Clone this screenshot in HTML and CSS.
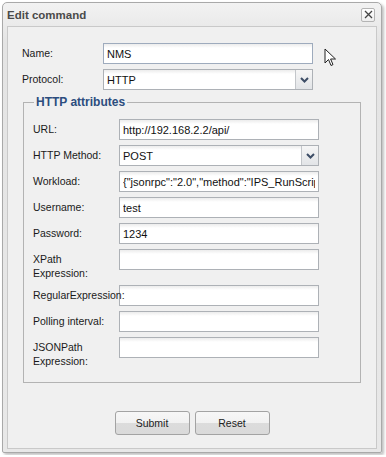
FILE: index.html
```html
<!DOCTYPE html>
<html lang="en">
<head>
  <meta charset="UTF-8">
  <title>Edit command</title>
  <link rel="stylesheet" href="styles.css">
</head>
<body>

  <div class="window">
    <div class="titlebar">
      <span class="title">Edit command</span>
      <button type="button" class="close" title="Close">
        <svg width="9" height="9" viewBox="0 0 9 9"><path d="M1 1 L8 8 M8 1 L1 8" stroke="#444" stroke-width="1.3" fill="none"/></svg>
      </button>
    </div>

    <form class="content">
      <div class="grid main-grid">
        <label for="cmdName">Name:</label>
        <input type="text" id="cmdName" class="field focused" value="NMS">

        <label for="protocol">Protocol:</label>
        <div class="combo">
          <select id="protocol"><option>HTTP</option></select>
          <span class="arrow"><svg width="9" height="6" viewBox="0 0 9 6"><path d="M1 1 L4.5 4.5 L8 1" stroke="#3d4d66" stroke-width="2" fill="none"/></svg></span>
        </div>
      </div>

      <fieldset class="attrs">
        <legend>HTTP attributes</legend>
        <div class="grid attr-grid">
          <label for="url">URL:</label>
          <input type="text" id="url" class="field" value="http://192.168.2.2/api/">

          <label for="method">HTTP Method:</label>
          <div class="combo">
            <select id="method"><option>POST</option></select>
            <span class="arrow"><svg width="9" height="6" viewBox="0 0 9 6"><path d="M1 1 L4.5 4.5 L8 1" stroke="#3d4d66" stroke-width="2" fill="none"/></svg></span>
          </div>

          <label for="workload">Workload:</label>
          <input type="text" id="workload" class="field" value='{"jsonrpc":"2.0","method":"IPS_RunScript","params":[12345],"id":"0"}'>

          <label for="username">Username:</label>
          <input type="text" id="username" class="field" value="test">

          <label for="password">Password:</label>
          <input type="text" id="password" class="field" value="1234">

          <label for="xpath">XPath<br>Expression:</label>
          <input type="text" id="xpath" class="field">

          <label for="regex">RegularExpression:</label>
          <input type="text" id="regex" class="field">

          <label for="polling">Polling interval:</label>
          <input type="text" id="polling" class="field">

          <label for="jsonpath">JSONPath<br>Expression:</label>
          <input type="text" id="jsonpath" class="field">
        </div>
      </fieldset>

      <div class="actions">
        <button type="button" class="btn">Submit</button>
        <button type="reset" class="btn">Reset</button>
      </div>
    </form>

    <svg class="pointer" width="13" height="20" viewBox="0 0 13 20">
      <path d="M1 1 L1 15 L4.5 11.5 L7 17.5 L9 16.6 L6.6 11 L11.5 11 Z" fill="#fff" stroke="#222" stroke-width="1" stroke-linejoin="round"/>
    </svg>
  </div>

</body>
</html>
```

FILE: styles.css
```css
body {
  margin: 0;
  background: #fff;
  font-family: 'Liberation Sans', Arial, sans-serif;
  color: #222;
}

.window {
  position: relative;
  width: 380px;
  margin: 2px;
  padding: 0 4px 3px;
  box-sizing: border-box;
  border: 1px solid #a9a9a9;
  border-radius: 5px 5px 2px 2px;
  background: linear-gradient(#f2f2f2, #e4e4e4 40px, #e8e8e8);
  box-shadow: 2px 2px 3px rgba(0, 0, 0, 0.25);
}

.titlebar {
  display: flex;
  align-items: center;
  justify-content: space-between;
  height: 23px;
  padding-right: 2px;
}

.title {
  font-size: 11.5px;
  font-weight: bold;
  color: #4a4a4a;
}

.close {
  width: 14px;
  height: 14px;
  padding: 0;
  display: flex;
  align-items: center;
  justify-content: center;
  border: 1px solid #b4b4b4;
  border-radius: 2px;
  background: linear-gradient(#ffffff, #eeeeee);
}

.content {
  border: 1px solid #c9c9c9;
  background: #f0f0f0;
  padding: 16px 0 13px;
}

.grid {
  display: grid;
  row-gap: 5px;
  align-items: start;
}

.grid label {
  position: relative;
  z-index: 1;
  font-size: 10.5px;
  line-height: 14px;
  padding-top: 3px;
  white-space: nowrap;
  color: #1a1a1a;
}

.main-grid {
  grid-template-columns: 81px 210px;
  padding-left: 14px;
}

.attr-grid {
  grid-template-columns: 86px 200px;
}

.field {
  box-sizing: border-box;
  width: 100%;
  height: 21px;
  margin: 0;
  padding: 0 3px;
  border: 1px solid #adb1b6;
  background: linear-gradient(#ececec, #ffffff 4px);
  font-family: 'Liberation Sans', Arial, sans-serif;
  font-size: 11px;
  color: #111;
  outline: none;
}

.field.focused {
  border-color: #9eabbd;
}

.combo {
  display: flex;
  box-sizing: border-box;
  height: 21px;
  border: 1px solid #adb1b6;
  background: linear-gradient(#ececec, #ffffff 4px);
}

.combo select {
  flex: 1;
  appearance: none;
  -webkit-appearance: none;
  border: none;
  background: transparent;
  padding: 0 3px;
  font-family: 'Liberation Sans', Arial, sans-serif;
  font-size: 11px;
  color: #111;
  outline: none;
}

.arrow {
  width: 16px;
  display: flex;
  align-items: center;
  justify-content: center;
  border-left: 1px solid #c3c6ca;
  background: linear-gradient(#f6f6f6, #e2e4e7);
}

.attrs {
  margin: 5px 15px 0;
  padding: 10px 0 14px 9px;
  border: 1px solid #b3b3b3;
  min-width: 0;
}

.attrs legend {
  margin-left: 1px;
  padding: 0 2px;
  font-size: 12px;
  line-height: 14px;
  font-weight: bold;
  color: #2c4d7e;
}

.actions {
  display: flex;
  justify-content: center;
  gap: 5px;
  margin-top: 28px;
}

.btn {
  width: 75px;
  height: 24px;
  padding: 0;
  border: 1px solid #a3a3a3;
  border-radius: 3px;
  background: linear-gradient(#f7f7f7 0, #f1f1f1 50%, #dcdcdc 50%, #dadada 100%);
  font-family: 'Liberation Sans', Arial, sans-serif;
  font-size: 10.5px;
  color: #222;
}

.pointer {
  position: absolute;
  left: 321px;
  top: 45px;
}
```
